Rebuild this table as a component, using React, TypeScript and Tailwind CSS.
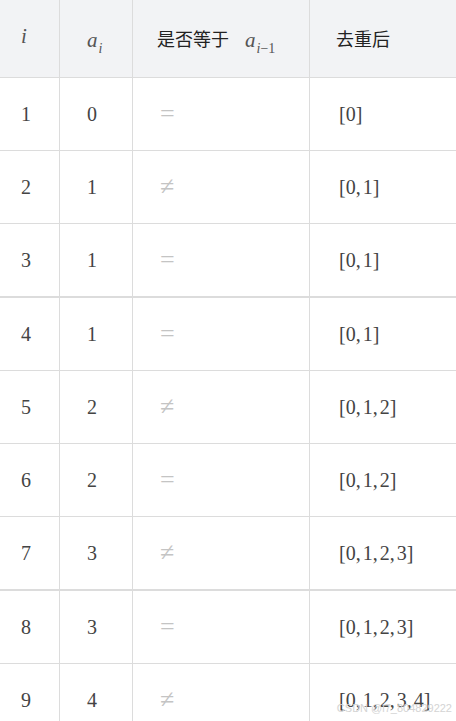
import React from "react";

const math = { fontFamily: '"Liberation Serif", "DejaVu Serif", serif' };
const cjk = { fontFamily: '"Noto Sans CJK SC", "Noto Sans", sans-serif' };

type Row = { i: string; a: string; eq: boolean; list: string[]; thick?: boolean };

const rows: Row[] = [
  { i: "1", a: "0", eq: true, list: ["0"] },
  { i: "2", a: "1", eq: false, list: ["0", "1"] },
  { i: "3", a: "1", eq: true, list: ["0", "1"], thick: true },
  { i: "4", a: "1", eq: true, list: ["0", "1"] },
  { i: "5", a: "2", eq: false, list: ["0", "1", "2"] },
  { i: "6", a: "2", eq: true, list: ["0", "1", "2"] },
  { i: "7", a: "3", eq: false, list: ["0", "1", "2", "3"], thick: true },
  { i: "8", a: "3", eq: true, list: ["0", "1", "2", "3"] },
  { i: "9", a: "4", eq: false, list: ["0", "1", "2", "3", "4"] },
];

export default function App() {
  return (
    <div className="relative w-[456px] h-[721px] overflow-hidden bg-white">
      <div className="flex h-[78px] bg-[#f2f3f5] border-b border-[#dcdcdc]">
        <div className="w-[60px] border-r border-[#dcdcdc] flex items-center pl-[21px] pb-[3px]">
          <span style={math} className="italic text-[21px] text-[#555]">i</span>
        </div>
        <div className="w-[73px] border-r border-[#dcdcdc] flex items-center pl-[27px] pt-[4px]">
          <span style={math} className="italic text-[21px] text-[#555]">
            a<sub className="text-[14px] align-[-3px] ml-[1px]">i</sub>
          </span>
        </div>
        <div className="w-[177px] border-r border-[#dcdcdc] flex items-center pl-[24px]">
          <span style={cjk} className="text-[18px] text-[#222]">是否等于</span>
          <span style={math} className="italic text-[21px] text-[#555] ml-[16px] mt-[4px]">
            a<sub className="text-[14px] align-[-3px] ml-[1px] not-italic"><i>i</i>−1</sub>
          </span>
        </div>
        <div className="flex-1 flex items-center pl-[26px]">
          <span style={cjk} className="text-[18px] text-[#222]">去重后</span>
        </div>
      </div>
      {rows.map((r) => (
        <div
          key={r.i}
          className={`flex ${r.thick ? "h-[74px] border-b-2" : "h-[73px] border-b"} border-[#dcdcdc]`}
        >
          <div className="w-[60px] border-r border-[#dcdcdc] flex items-center pl-[21px]">
            <span style={math} className="text-[20px] text-[#444]">{r.i}</span>
          </div>
          <div className="w-[73px] border-r border-[#dcdcdc] flex items-center pl-[27px]">
            <span style={math} className="text-[20px] text-[#444]">{r.a}</span>
          </div>
          <div className="w-[177px] border-r border-[#dcdcdc] flex items-center pl-[27px]">
            <span style={math} className="text-[26px] leading-none text-[#c4c4c4]">{r.eq ? "=" : "≠"}</span>
          </div>
          <div className="flex-1 flex items-center pl-[29px]">
            <span style={math} className="text-[20px] text-[#444]">
              [
              {r.list.map((v, idx) => (
                <React.Fragment key={idx}>
                  {v}
                  {idx < r.list.length - 1 && <span className="mr-[2px]">,</span>}
                </React.Fragment>
              ))}
              ]
            </span>
          </div>
        </div>
      ))}
      <div
        className="absolute right-[4px] bottom-[7px] text-[11px] text-[#d4d4d4] leading-none"
        style={{ fontFamily: '"Liberation Sans", Arial, sans-serif' }}
      >
        CSDN @l7_804829222
      </div>
    </div>
  );
}
